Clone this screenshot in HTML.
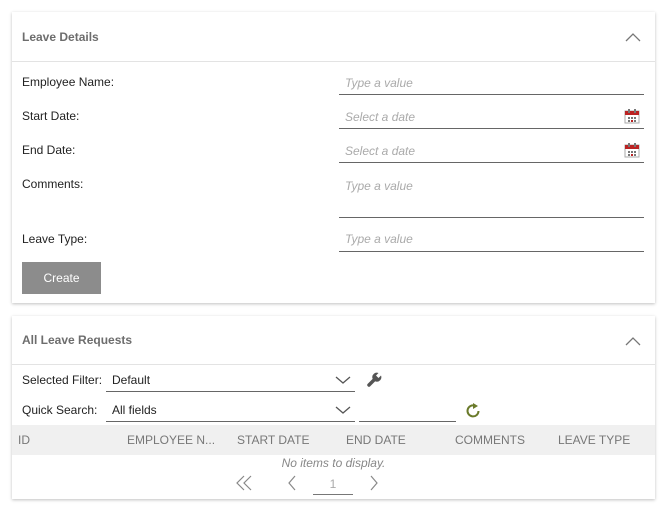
<!DOCTYPE html>
<html><head><style>
*{box-sizing:border-box;margin:0;padding:0}
body{width:667px;height:512px;background:#fff;font-family:"Liberation Sans",sans-serif;font-size:12px;color:#222;position:relative;overflow:hidden}
.p{position:absolute;left:12px;width:643px;background:#fff;box-shadow:0 1px 3px rgba(0,0,0,.25)}
.h{height:50px;border-bottom:1px solid #e3e3e3;position:relative}
.h b{position:absolute;left:10px;top:18px;color:#6d6d6d;font-size:12px}
.chev{position:absolute;right:14px;top:20px}
.a{position:absolute}
.lbl{font-size:12px;color:#222}
.in{position:absolute;left:339px;width:305px;border-bottom:1px solid #666;color:#aaa;font-style:italic;padding-left:6px;padding-top:1px;font-size:12px}
.th{position:absolute;top:433px;color:#777;font-size:12px}
</style></head><body>
<div class="p" style="top:12px;height:291px">
<div class="h"><b>Leave Details</b><svg class="chev" width="16" height="10"><path d="M1 9L8 2L15 9" stroke="#777" stroke-width="1.3" fill="none"/></svg></div>
</div>
<div class="a lbl" style="left:22px;top:75px">Employee Name:</div>
<div class="a lbl" style="left:22px;top:109px">Start Date:</div>
<div class="a lbl" style="left:22px;top:143px">End Date:</div>
<div class="a lbl" style="left:22px;top:177px">Comments:</div>
<div class="a lbl" style="left:22px;top:232px">Leave Type:</div>
<div class="in" style="top:75px;height:20px">Type a value</div>
<div class="in" style="top:109px;height:20px">Select a date</div>
<div class="in" style="top:143px;height:20px">Select a date</div>
<div class="in" style="top:178px;height:40px">Type a value</div>
<div class="in" style="top:231px;height:21px">Type a value</div>
<svg class="a" style="left:624px;top:108px" width="16" height="16"><rect x="1" y="3" width="14" height="12" fill="#fff" stroke="#aaa"/><rect x="1" y="3" width="14" height="4" fill="#b22"/><rect x="4" y="1" width="2" height="4" fill="#777"/><rect x="10" y="1" width="2" height="4" fill="#777"/><g fill="#777"><rect x="4" y="9" width="2" height="2"/><rect x="7" y="9" width="2" height="2"/><rect x="10" y="9" width="2" height="2"/><rect x="4" y="12" width="2" height="2"/><rect x="7" y="12" width="2" height="2" fill="#b22"/><rect x="10" y="12" width="2" height="2"/></g></svg>
<svg class="a" style="left:624px;top:142px" width="16" height="16"><rect x="1" y="3" width="14" height="12" fill="#fff" stroke="#aaa"/><rect x="1" y="3" width="14" height="4" fill="#b22"/><rect x="4" y="1" width="2" height="4" fill="#777"/><rect x="10" y="1" width="2" height="4" fill="#777"/><g fill="#777"><rect x="4" y="9" width="2" height="2"/><rect x="7" y="9" width="2" height="2"/><rect x="10" y="9" width="2" height="2"/><rect x="4" y="12" width="2" height="2"/><rect x="7" y="12" width="2" height="2" fill="#b22"/><rect x="10" y="12" width="2" height="2"/></g></svg>
<div class="a" style="left:22px;top:262px;width:79px;height:32px;background:#8c8c8c;color:#fff;text-align:center;line-height:32px">Create</div>

<div class="p" style="top:316px;height:183px">
<div class="h" style="height:49px"><b style="top:17px">All Leave Requests</b><svg class="chev" width="16" height="10"><path d="M1 9L8 2L15 9" stroke="#777" stroke-width="1.3" fill="none"/></svg></div>
</div>
<div class="a lbl" style="left:22px;top:373px">Selected Filter:</div>
<div class="a lbl" style="left:22px;top:403px">Quick Search:</div>
<div class="a" style="left:106px;top:370px;width:249px;height:22px;border-bottom:1px solid #666;padding:3px 6px">Default</div>
<div class="a" style="left:106px;top:400px;width:249px;height:22px;border-bottom:1px solid #666;padding:3px 6px">All fields</div>
<svg class="a" style="left:335px;top:375px" width="16" height="10"><path d="M1 2L8 8L15 2" stroke="#555" stroke-width="1.3" fill="none"/></svg>
<svg class="a" style="left:335px;top:405px" width="16" height="10"><path d="M1 2L8 8L15 2" stroke="#555" stroke-width="1.3" fill="none"/></svg>
<div class="a" style="left:359px;top:400px;width:97px;height:22px;border-bottom:1px solid #666"></div>
<svg class="a" style="left:366px;top:371px" width="17" height="17"><path d="M3 14L9 8" stroke="#555" stroke-width="3.5" stroke-linecap="round"/><path d="M6.5 7.5A4.5 4.5 0 0 1 12.5 2L10 4.5L12.5 7L15 4.5A4.5 4.5 0 0 1 9.5 10.5Z" fill="#555"/></svg>
<svg class="a" style="left:465px;top:402px" width="17" height="17"><path d="M13.5 9A5.5 5.5 0 1 1 10 3.8" stroke="#6a7a2a" stroke-width="2" fill="none"/><path d="M8 1L13 4L8 7z" fill="#6a7a2a"/></svg>
<div class="a" style="left:12px;top:425px;width:643px;height:30px;background:#f0f0f0"></div>
<div class="th" style="left:18px">ID</div>
<div class="th" style="left:127px">EMPLOYEE N...</div>
<div class="th" style="left:237px">START DATE</div>
<div class="th" style="left:346px">END DATE</div>
<div class="th" style="left:455px">COMMENTS</div>
<div class="th" style="left:558px">LEAVE TYPE</div>
<div class="a" style="left:12px;top:456px;width:643px;text-align:center;color:#888;font-style:italic">No items to display.</div>
<svg class="a" style="left:235px;top:475px" width="18" height="16"><path d="M9 1L2 8L9 15M16 1L9 8L16 15" stroke="#888" stroke-width="1.2" fill="none"/></svg>
<svg class="a" style="left:287px;top:475px" width="10" height="16"><path d="M8 1L2 8L8 15" stroke="#888" stroke-width="1.2" fill="none"/></svg>
<div class="a" style="left:313px;top:477px;width:40px;height:18px;border-bottom:1px solid #777;text-align:center;color:#aaa">1</div>
<svg class="a" style="left:369px;top:475px" width="10" height="16"><path d="M2 1L8 8L2 15" stroke="#888" stroke-width="1.2" fill="none"/></svg>
</body></html>
